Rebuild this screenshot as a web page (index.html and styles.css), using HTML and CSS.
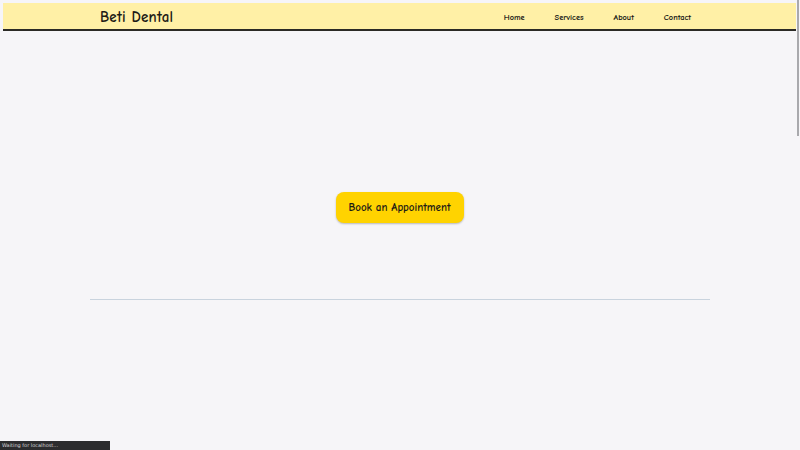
FILE: index.html
```html
<!DOCTYPE html>
<html lang="en">
<head>
<meta charset="utf-8">
<title>Beti Dental</title>
<link rel="stylesheet" href="styles.css">
</head>
<body>
<div class="page">
  <header class="site-header">
    <div class="brand">Beti Dental</div>
    <nav class="nav">
      <a href="#" class="nav-link">Home</a>
      <a href="#" class="nav-link">Services</a>
      <a href="#" class="nav-link">About</a>
      <a href="#" class="nav-link">Contact</a>
    </nav>
  </header>
  <main class="hero">
    <a href="#" class="cta">Book an Appointment</a>
  </main>
  <hr class="divider">
</div>
<div class="scrollbar"></div>
<div class="status">Waiting for localhost...</div>
</body>
</html>
```
FILE: styles.css
```css
* { box-sizing: border-box; }
html, body {
  margin: 0;
  padding: 0;
  height: 100%;
  background: #f6f5f8;
  font-family: "Comic Sans MS", "Comic Neue", "Noto Sans", sans-serif;
  color: #1d1b16;
  overflow: hidden;
}
.page {
  padding: 3px 4px 0 3px;
}
.site-header {
  height: 28px;
  background: #fff0a6;
  border-bottom: 2px solid #2b2a26;
  display: flex;
  align-items: center;
  justify-content: space-between;
  padding: 2px 105px 0 97px;
}
.brand {
  font-size: 15px;
  font-weight: 700;
  letter-spacing: 0.2px;
}
.nav {
  display: flex;
  padding-top: 1px;
}
.nav-link {
  font-size: 8.3px;
  font-weight: 700;
  color: #111;
  text-decoration: none;
}
.nav-link + .nav-link { margin-left: 30px; }
.hero {
  display: flex;
  justify-content: center;
  align-items: center;
  padding-top: 161px;
}
.cta {
  display: inline-flex;
  align-items: center;
  justify-content: center;
  width: 128px;
  height: 31px;
  background: #ffd300;
  border-radius: 8px;
  box-shadow: 0 1px 2px rgba(0,0,0,0.25);
  font-size: 11px;
  font-weight: 700;
  color: #1d1b16;
  text-decoration: none;
}
.divider {
  margin: 76px 86px 0 87px;
  border: 0;
  height: 1px;
  background: #c9d3de;
}
.scrollbar {
  position: fixed;
  right: 1px;
  top: 0;
  width: 2px;
  height: 136px;
  background: #a9a9ad;
}
.status {
  position: fixed;
  left: 0;
  bottom: 0;
  width: 110px;
  height: 9px;
  background: #2c2c2e;
  color: #d8d8d8;
  font-family: "DejaVu Sans", sans-serif;
  font-size: 5px;
  line-height: 9px;
  padding-left: 2px;
}
```
